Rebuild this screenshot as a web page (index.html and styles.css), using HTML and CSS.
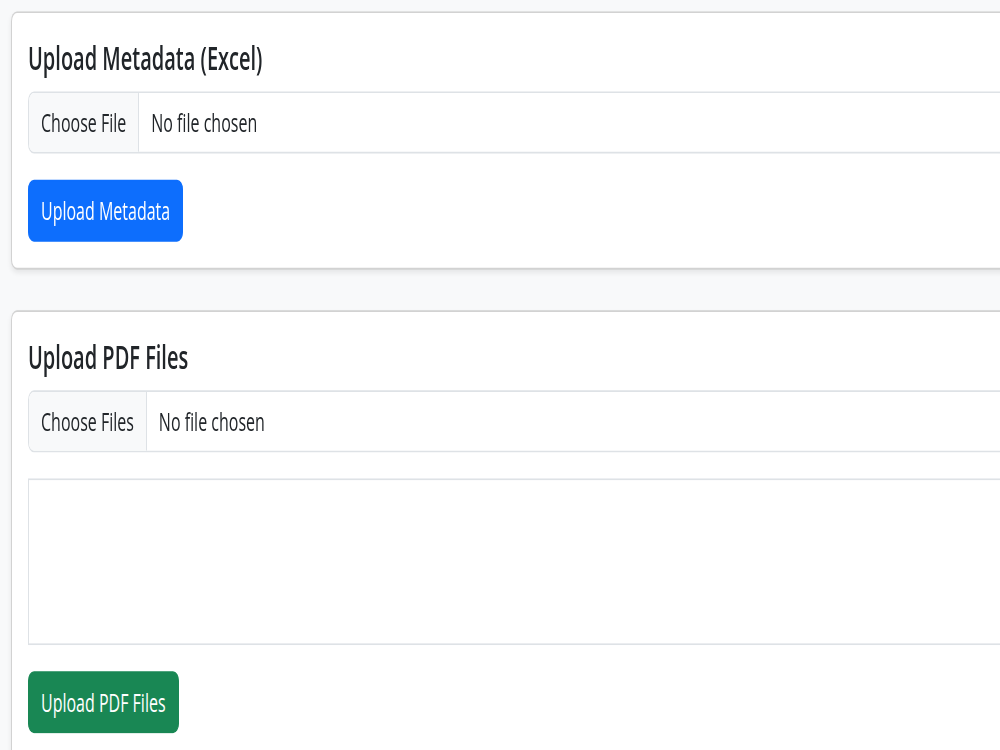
FILE: index.html
```html
<!DOCTYPE html>
<html lang="en">
<head>
    <meta charset="UTF-8">
    <meta name="viewport" content="width=device-width, initial-scale=1.0">
    <title>Upload Metadata &amp; PDF Files</title>
    <link rel="stylesheet" href="styles.css">
</head>
<body>
    <div class="page">
        <!-- Metadata upload -->
        <div class="card">
            <div class="card-body">
                <h5 class="card-title">Upload Metadata (Excel)</h5>
                <form id="metadataForm">
                    <input type="file" class="form-control" id="metadataFile" accept=".xlsx,.xls">
                    <button type="submit" class="btn btn-primary">Upload Metadata</button>
                </form>
            </div>
        </div>

        <!-- PDF upload -->
        <div class="card">
            <div class="card-body">
                <h5 class="card-title">Upload PDF Files</h5>
                <form id="pdfForm">
                    <input type="file" class="form-control" id="pdfFiles" accept=".pdf" multiple>
                    <div class="file-list" id="fileList"></div>
                    <button type="submit" class="btn btn-success">Upload PDF Files</button>
                </form>
            </div>
        </div>
    </div>
</body>
</html>
```

FILE: styles.css
```css
html { overflow: hidden; }
body {
    margin: 0; min-height: 100vh;
    background: #f8f9fa;
    color: #212529;
    font-family: 'Open Sans', 'Noto Sans', sans-serif;
    font-size: 16px; line-height: 1.5;
}
/* the capture is stretched vertically */
.page {
    padding: 6.7px 0 0 11px;
    transform: scaleY(1.633); transform-origin: top left;
}
.card {
    width: 1060px; margin-bottom: 25px;
    background: #fff; border: 1px solid rgba(0,0,0,0.175);
    border-radius: 6px; box-shadow: 0 2px 4px rgba(0,0,0,0.075);
}
.card-body { padding: 16px; }
.card-title {
    margin: 0 0 8px; font-size: 20px; font-weight: 600; line-height: 1.2;
}
.form-control {
    display: block; box-sizing: border-box; width: 100%;
    margin: 0 0 16px; padding: 6px 12px;
    font: inherit; color: #212529; background: #fff;
    border: 1px solid #dee2e6; border-radius: 6px;
    overflow: hidden;
}
.form-control::file-selector-button {
    margin: -6px 12px -6px -12px; padding: 6px 12px;
    font: inherit; color: #212529; background: #f8f9fa;
    border: 0; border-right: 1px solid #dee2e6; border-radius: 0;
}
.file-list {
    height: 100px; margin-bottom: 16px;
    border: 1px solid #dee2e6; background: #fff;
}
.btn {
    display: inline-block; padding: 6px 12px;
    font: inherit; color: #fff; line-height: 1.5;
    border: 1px solid transparent; border-radius: 6px; cursor: pointer;
}
.btn-primary { background: #0d6efd; border-color: #0d6efd; }
.btn-success { background: #198754; border-color: #198754; }
```
